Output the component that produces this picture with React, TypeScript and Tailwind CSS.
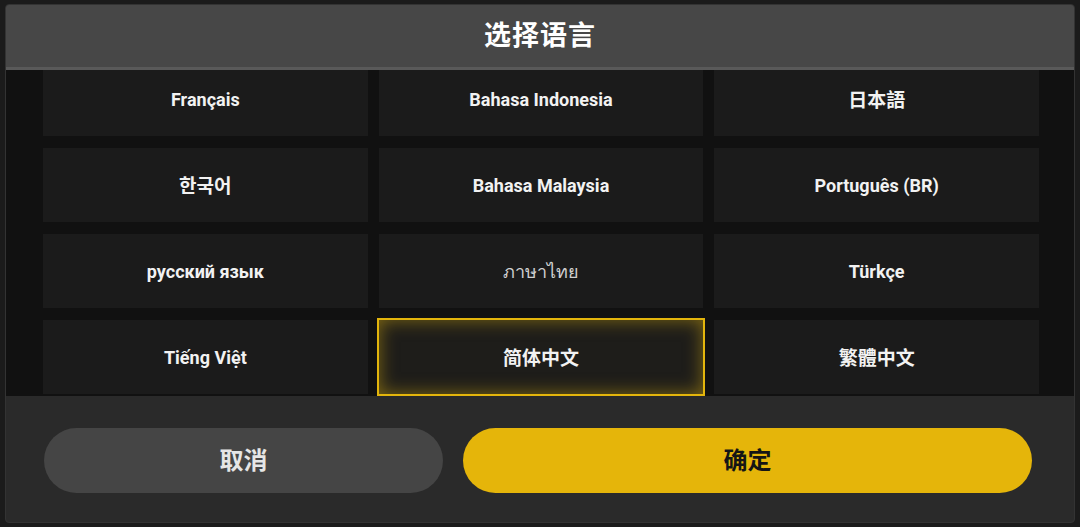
import React from "react";

const langs: { label: string; thin?: boolean; selected?: boolean }[] = [
  { label: "Français" },
  { label: "Bahasa Indonesia" },
  { label: "日本語" },
  { label: "한국어" },
  { label: "Bahasa Malaysia" },
  { label: "Português (BR)" },
  { label: "русский язык" },
  { label: "ภาษาไทย", thin: true },
  { label: "Türkçe" },
  { label: "Tiếng Việt" },
  { label: "简体中文", selected: true },
  { label: "繁體中文" },
];

const isCJK = (s: string) => /[\u3000-\u9fff\uac00-\ud7af]/.test(s);

export default function App() {
  return (
    <div
      className="w-[1080px] h-[527px] bg-[#1b1b1b] pt-[4px] pl-[5px] pr-[5px] overflow-hidden"
      style={{ fontFamily: "Roboto, 'Noto Sans CJK SC', 'Noto Sans', sans-serif" }}
    >
      <div className="w-[1070px] h-[519px] rounded-[4px] overflow-hidden flex flex-col bg-[#2a2a2a] border border-[#333333]">
        <div className="h-[65px] shrink-0 bg-[#474747] border-b-[3px] border-[#595959] flex items-center justify-center">
          <span className="text-white text-[27px] font-bold tracking-[1px]">选择语言</span>
        </div>
        <div className="h-[326px] shrink-0 bg-[#111111] overflow-hidden pl-[37px] pr-[35px]">
          <div className="-mt-[8px] grid grid-cols-3 gap-x-[11px] gap-y-[12px]">
            {langs.map((l) => (
              <div
                key={l.label}
                className={
                  l.selected
                    ? "h-[74px] flex items-center justify-center bg-[#1e1d1a] outline-2 outline-[#e3b50c] shadow-[inset_0_0_18px_rgba(227,181,12,0.5)]"
                    : "h-[74px] flex items-center justify-center bg-[#1b1b1b]"
                }
              >
                <span
                  className={
                    l.thin
                      ? "text-[#d0d0d0] text-[18px] font-normal"
                      : isCJK(l.label)
                      ? "text-[#f2f2f2] text-[19px] font-bold translate-y-[2px]"
                      : "text-[#f2f2f2] text-[18px] font-bold"
                  }
                >
                  {l.label}
                </span>
              </div>
            ))}
          </div>
        </div>
        <div className="flex-1 flex items-start pt-[32px] pl-[38px] pr-[42px] gap-[20px]">
          <button className="w-[399px] h-[65px] rounded-full bg-[#454545] text-[#e6e6e6] text-[24px] font-bold flex items-center justify-center">
            取消
          </button>
          <button className="flex-1 h-[65px] rounded-full bg-[#e5b50a] text-[#151515] text-[24px] font-bold flex items-center justify-center">
            确定
          </button>
        </div>
      </div>
    </div>
  );
}
